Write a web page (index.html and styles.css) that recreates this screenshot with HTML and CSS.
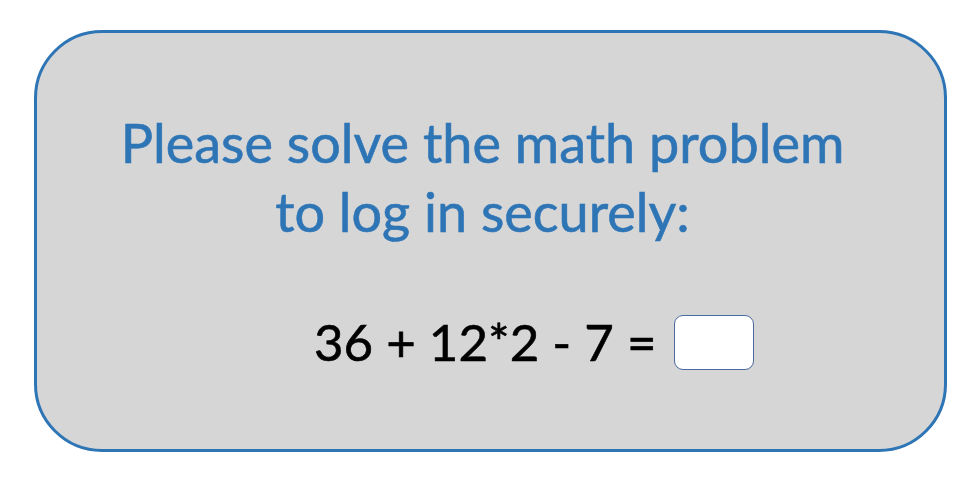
FILE: index.html
```html
<!DOCTYPE html>
<html>
<head>
<meta charset="utf-8">
<link rel="stylesheet" href="styles.css">
</head>
<body>
<div class="card">
  <p class="prompt">Please solve the math problem<br>to log in securely:</p>
  <div class="problem">
    <span class="expr">36 + 12*2 - 7 =</span>
    <span class="answer"></span>
  </div>
</div>
</body>
</html>
```
FILE: styles.css
```css
html, body {
  margin: 0;
  padding: 0;
  background: #ffffff;
}
body {
  padding: 30px 0 0 34px;
  font-family: Lato, "Open Sans", sans-serif;
}
.card {
  box-sizing: border-box;
  width: 913px;
  height: 422px;
  border: 3px solid #2e75b6;
  border-radius: 68px;
  background: #d6d6d6;
  padding-top: 75px;
}
.prompt {
  margin: 0 16px 0 0;
  text-align: center;
  color: #2e75b6;
  font-size: 54px;
  line-height: 69px;
  -webkit-text-stroke: 0.6px #2e75b6;
}
.problem {
  display: flex;
  align-items: center;
  margin: 66px 0 0 277px;
  gap: 17px;
}
.expr {
  font-size: 51px;
  color: #000;
  line-height: 60px;
  -webkit-text-stroke: 0.6px #000;
}
.answer {
  box-sizing: border-box;
  width: 80px;
  height: 55px;
  background: #fff;
  border: 1.5px solid #4a6aa0;
  border-radius: 9px;
}
```
